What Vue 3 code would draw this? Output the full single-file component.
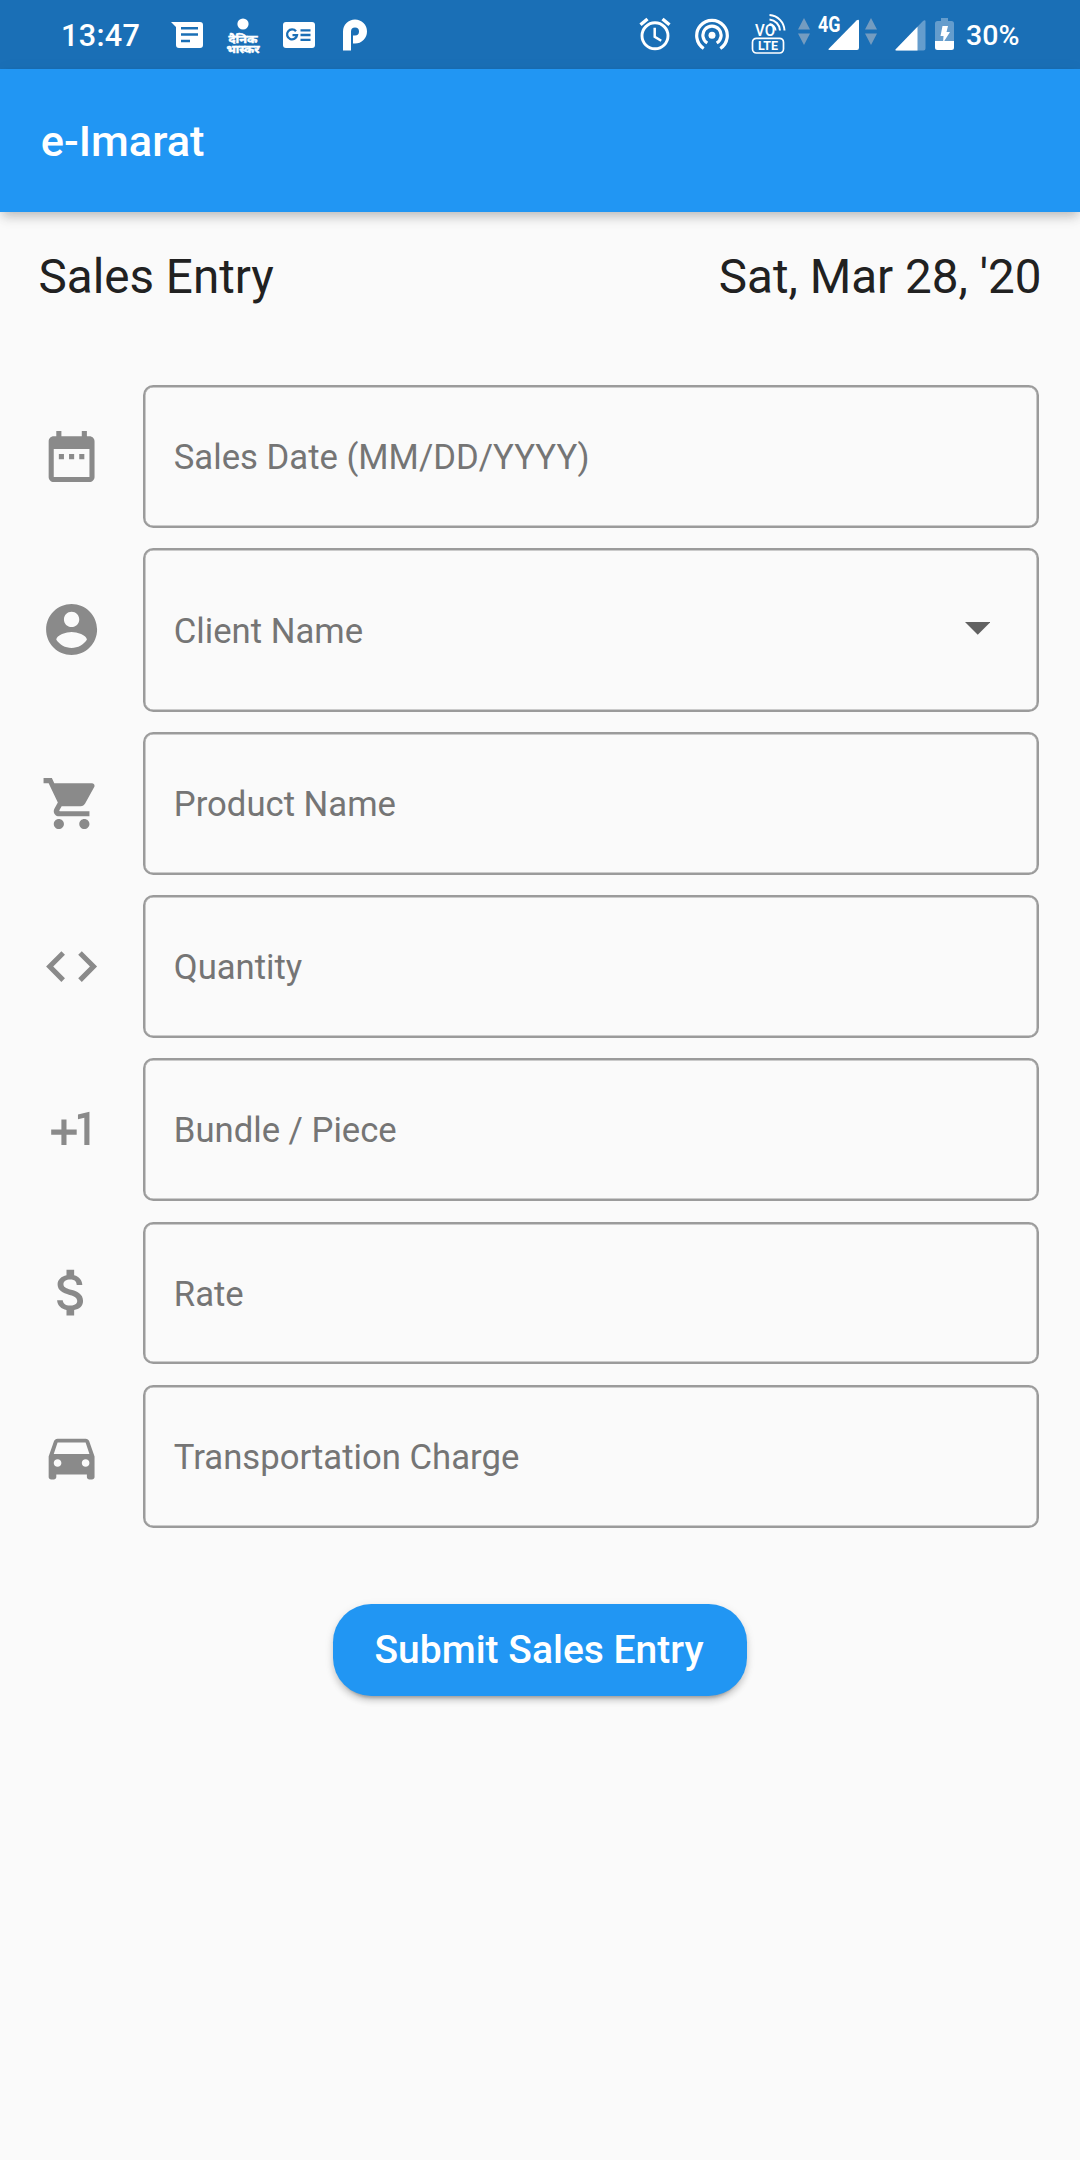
<script setup>
const fields = [
  {
    label: 'Sales Date (MM/DD/YYYY)',
    icon: 'M9 11H7v2h2v-2zm4 0h-2v2h2v-2zm4 0h-2v2h2v-2zm2-7h-1V2h-2v2H8V2H6v2H5c-1.11 0-1.99.9-1.99 2L3 20c0 1.1.89 2 2 2h14c1.1 0 2-.9 2-2V6c0-1.1-.9-2-2-2zm0 16H5V9h14v11z'
  },
  {
    label: 'Client Name',
    select: true,
    icon: 'M12 2C6.48 2 2 6.48 2 12s4.48 10 10 10 10-4.48 10-10S17.52 2 12 2zm0 3c1.66 0 3 1.34 3 3s-1.34 3-3 3-3-1.34-3-3 1.34-3 3-3zm0 14.2c-2.5 0-4.71-1.28-6-3.22.03-1.99 4-3.08 6-3.08 1.99 0 5.97 1.09 6 3.08-1.29 1.94-3.5 3.22-6 3.22z'
  },
  {
    label: 'Product Name',
    icon: 'M7 18c-1.1 0-1.99.9-1.99 2S5.9 22 7 22s2-.9 2-2-.9-2-2-2zM1 2v2h2l3.6 7.59-1.35 2.45c-.16.28-.25.61-.25.96 0 1.1.9 2 2 2h12v-2H7.42c-.14 0-.25-.11-.25-.25l.03-.12.9-1.63h7.45c.75 0 1.41-.41 1.75-1.03l3.58-6.49c.08-.14.12-.31.12-.48 0-.55-.45-1-1-1H5.21l-.94-2H1zm16 16c-1.1 0-1.99.9-1.99 2s.89 2 1.99 2 2-.9 2-2-.9-2-2-2z'
  },
  {
    label: 'Quantity',
    icon: 'M9.4 16.6L4.8 12l4.6-4.6L8 6l-6 6 6 6 1.4-1.4zm5.2 0l4.6-4.6-4.6-4.6L16 6l6 6-6 6-1.4-1.4z'
  },
  {
    label: 'Bundle / Piece',
    icon: 'M10 8H8v4H4v2h4v4h2v-4h4v-2h-4zm4.500-1.920V7.900l2.500-.5V18h2V5z'
  },
  {
    label: 'Rate',
    icon: 'M11.8 10.9c-2.27-.59-3-1.2-3-2.15 0-1.09 1.01-1.85 2.7-1.85 1.78 0 2.44.85 2.5 2.1h2.21c-.07-1.72-1.12-3.3-3.21-3.81V3h-3v2.16c-1.94.42-3.5 1.68-3.5 3.61 0 2.31 1.91 3.46 4.7 4.13 2.5.6 3 1.48 3 2.41 0 .69-.49 1.79-2.7 1.79-2.06 0-2.87-.92-2.98-2.1h-2.2c.12 2.19 1.76 3.42 3.68 3.83V21h3v-2.15c1.95-.37 3.5-1.5 3.5-3.55 0-2.84-2.43-3.81-4.7-4.4z'
  },
  {
    label: 'Transportation Charge',
    icon: 'M18.92 6.01C18.72 5.42 18.16 5 17.5 5h-11c-.66 0-1.21.42-1.42 1.01L3 12v8c0 .55.45 1 1 1h1c.55 0 1-.45 1-1v-1h12v1c0 .55.45 1 1 1h1c.55 0 1-.45 1-1v-8l-2.08-5.99zM6.5 16c-.83 0-1.5-.67-1.5-1.5S5.67 13 6.5 13s1.5.67 1.5 1.5S7.33 16 6.5 16zm11 0c-.83 0-1.5-.67-1.5-1.5s.67-1.5 1.5-1.5 1.5.67 1.5 1.5-.67 1.5-1.5 1.5zM5 11l1.5-4.5h11L19 11H5z'
  }
]
</script>

<template>
  <div class="screen">
    <div class="status">
      <div class="left">
        <span class="clock">13:47</span>
        <svg class="messages" width="32" height="26" viewBox="0 0 32 26">
          <path fill="#fff" fill-rule="evenodd" d="M0 0h29a3 3 0 0 1 3 3v20a3 3 0 0 1-3 3H8a3 3 0 0 1-3-3V5zM10 5v2.500h17V5zM10 11.200v2.500h17v-2.500zM10 17.700v2.500h9v-2.500z" />
        </svg>
        <svg class="bhaskar" width="40" height="44" viewBox="0 0 40 44">
          <circle cx="20" cy="6" r="5.600" fill="#fff" />
          <text x="20" y="25" text-anchor="middle" textLength="29" lengthAdjust="spacingAndGlyphs">दैनिक</text>
          <text x="20" y="35" text-anchor="middle" textLength="33" lengthAdjust="spacingAndGlyphs">भास्कर</text>
        </svg>
        <svg class="news" width="32" height="26" viewBox="0 0 32 26">
          <rect width="32" height="26" rx="3" fill="#fff" />
          <path fill="none" stroke="#1a6fb6" stroke-width="2.300" d="M13 9.300A5 5 0 1 0 14 13.200H9.500M17.500 8.300H27.500M17.500 13H27.500M17.500 17.800H27.500" />
        </svg>
        <svg class="pee" width="24" height="32" viewBox="0 0 24 32">
          <path fill="none" stroke="#fff" stroke-width="8" d="M4 31.500V12.500A8 8 0 1 1 12 20.500H10" />
        </svg>
      </div>
      <div class="right">
        <svg class="alarm" width="32" height="34" viewBox="0 0 32 34" fill="none" stroke="#fff">
          <circle cx="16" cy="18.800" r="13" stroke-width="2.900" />
          <path stroke-width="2.500" d="M15.700 10.800v9l6.500 4" />
          <path stroke-width="3.400" d="M1.500 7.800L8.500 2M30.500 7.800L23.500 2" />
        </svg>
        <svg class="hotspot" width="34" height="34" viewBox="0 0 34 34" fill="none" stroke="#fff" stroke-width="3.200">
          <circle cx="17" cy="18.300" r="3.500" fill="#fff" stroke="none" />
          <path d="M12.300 26A9.100 9.100 0 1 1 21.700 26M8.700 31.500A15.300 15.300 0 1 1 25.300 31.500" />
        </svg>
        <svg class="volte" width="36" height="42" viewBox="0 0 36 42">
          <text class="vo" x="4" y="23" textLength="20" lengthAdjust="spacingAndGlyphs">VO</text>
          <g fill="none" stroke="#fff" stroke-width="2">
            <path d="M18.500 11A7 7 0 0 1 24.500 17.500M18.500 6.500A11.500 11.500 0 0 1 29 17.500M18.500 2A16 16 0 0 1 33.500 17.500" />
            <rect x="1.500" y="25.300" width="31" height="14.700" rx="4" stroke-width="1.700" />
          </g>
          <text class="lte" x="7" y="37.300" textLength="20" lengthAdjust="spacingAndGlyphs">LTE</text>
        </svg>
        <svg class="arrows" width="12" height="28" viewBox="0 0 12 28">
          <path fill="#749cc0" d="M0 11.500L6 0l6 11.500zM0 15.500L6 27l6-11.500z" />
        </svg>
        <svg class="four" width="46" height="40" viewBox="-4 -4 46 40">
          <text x="0" y="16.500" textLength="22.500" lengthAdjust="spacingAndGlyphs">4G</text>
          <path fill="#fff" d="M10.500 34L38.500 5.500Q41 4 41 6V32.800Q41 35 39 35H11.500Q10 35 10.500 34z" />
        </svg>
        <svg class="arrows second" width="12" height="28" viewBox="0 0 12 28">
          <path fill="#749cc0" d="M0 11.500L6 0l6 11.500zM0 15.500L6 27l6-11.500z" />
        </svg>
        <svg class="signal" width="31" height="31" viewBox="0 0 31 31">
          <path fill="#659dcd" d="M.5 29.500L28 1Q30.500-.5 30.500 1.500V28.500Q30.500 30.500 28.500 30.500H1.500Q0 30.500.5 29.500z" />
          <path fill="#fff" d="M.5 29.500L22.500 6.700V30.500H1.500Q0 30.500.5 29.500z" />
        </svg>
        <svg class="battery" width="19" height="32" viewBox="0 0 19 32">
          <path fill="#659dcd" d="M6 0h7v3h3.500Q19 3 19 5.500V23H0V5.500Q0 3 2.500 3H6z" />
          <path fill="#fff" d="M0 23h19v6.500Q19 32 16.500 32h-14Q0 32 0 29.500zM7.500 8h5.500L11.500 14H15L8 25l.5-7H5.500z" />
        </svg>
        <span class="percent">30%</span>
      </div>
    </div>

    <header class="appbar"><h1>e-Imarat</h1></header>

    <main>
      <div class="heading">
        <span>Sales Entry</span>
        <span>Sat, Mar 28, '20</span>
      </div>
      <form class="form">
        <div v-for="f in fields" :key="f.label" class="row">
          <svg class="icon" viewBox="0 0 24 24"><path :d="f.icon" /></svg>
          <div class="field" :class="{ select: f.select }">
            <span class="label">{{ f.label }}</span>
            <svg v-if="f.select" class="caret" viewBox="0 0 10 5"><path d="M0 0l5 5 5-5z" /></svg>
          </div>
        </div>
      </form>
      <button class="submit" type="button">Submit Sales Entry</button>
    </main>
  </div>
</template>

<style>
body {
  background: #fafafa;
}
</style>

<style scoped>
.screen {
  width: 1080px;
  height: 2160px;
  overflow: hidden;
  background: #fafafa;
  font-family: Roboto, 'Noto Sans', sans-serif;
  display: flex;
  flex-direction: column;
}
.status {
  height: 69px;
  flex: none;
  box-sizing: border-box;
  padding: 0 61px;
  background: #1a6fb6;
  color: #fff;
  display: flex;
  justify-content: space-between;
}
.status svg {
  flex: none;
  display: block;
}
.left,
.right {
  display: flex;
  align-items: flex-start;
}
.clock,
.percent {
  line-height: 71px;
  font-weight: 500;
  white-space: nowrap;
}
.clock {
  width: 110px;
  font-size: 30.600px;
  letter-spacing: 0.300px;
}
.percent {
  width: 53px;
  margin-left: 12px;
  font-size: 28.500px;
}
.messages {
  margin-top: 22px;
}
.bhaskar {
  margin: 18px 0 0 20px;
}
.bhaskar text {
  font-size: 11px;
  font-weight: 700;
  fill: #fff;
  stroke: #fff;
  stroke-width: 0.500px;
}
.news {
  margin: 22px 0 0 20px;
}
.pee {
  margin: 19px 0 0 28px;
}
.alarm {
  margin-top: 17px;
}
.hotspot {
  margin: 17px 0 0 24px;
}
.volte {
  margin: 13px 0 0 22px;
}
.vo {
  font-size: 16px;
  font-weight: 500;
  fill: #fff;
}
.lte {
  font-size: 12.500px;
  font-weight: 700;
  fill: #fff;
}
.arrows {
  margin: 18px 0 0 11px;
}
.four {
  margin: 11px 0 0 4px;
}
.four text {
  font-size: 21.500px;
  font-weight: 700;
  fill: #fff;
}
.arrows.second {
  margin-left: 5px;
}
.signal {
  margin: 19.500px 0 0 18px;
}
.battery {
  margin: 18px 0 0 9px;
}
.appbar {
  height: 143px;
  flex: none;
  box-sizing: border-box;
  display: flex;
  align-items: center;
  padding: 2px 0 0 40.800px;
  background: #2196f3;
  color: #fff;
  box-shadow:
    0 5px 10px -2.500px rgba(0, 0, 0, 0.2),
    0 8px 12px rgba(0, 0, 0, 0.05),
    0 2.500px 20px rgba(0, 0, 0, 0.04);
}
.appbar h1 {
  margin: 0;
  font-size: 43.350px;
  font-weight: 500;
  line-height: 50px;
}
main {
  display: flex;
  flex-direction: column;
  align-items: center;
}
.heading {
  width: 1003px;
  padding-top: 37px;
  display: flex;
  justify-content: space-between;
  font-size: 47.600px;
  line-height: 56px;
  color: #212121;
}
.form {
  width: 998.400px;
  margin-top: 80.200px;
  display: flex;
  flex-direction: column;
  gap: 20.400px;
}
.row {
  display: flex;
  align-items: center;
  gap: 40.800px;
}
.icon {
  width: 61.200px;
  height: 61.200px;
  flex: none;
  fill: #8a8a8a;
}
.field {
  flex: 1;
  height: 142.800px;
  box-sizing: border-box;
  border: 2px solid #9b9b9b;
  border-radius: 10.200px;
  box-shadow: inset 0 0 0 0.500px #9b9b9b;
  padding: 0 47px 0 29px;
  display: flex;
  align-items: center;
  justify-content: space-between;
}
.field.select {
  height: 163.200px;
}
.label {
  padding-top: 1.500px;
  font-size: 34.680px;
  line-height: 40px;
  color: #757575;
}
.caret {
  width: 25.500px;
  height: 12.750px;
  margin-bottom: 3.500px;
  fill: #616161;
}
.submit {
  width: 413.500px;
  height: 92px;
  margin-top: 76px;
  padding: 0 2px 0 0;
  border: 0;
  border-radius: 38.250px;
  background: #2196f3;
  color: #fff;
  font-family: inherit;
  font-size: 39px;
  font-weight: 500;
  box-shadow:
    0 7px 3px -5px rgba(0, 0, 0, 0.2),
    0 5px 6px rgba(0, 0, 0, 0.13),
    0 2.500px 10px rgba(0, 0, 0, 0.1);
}
</style>
